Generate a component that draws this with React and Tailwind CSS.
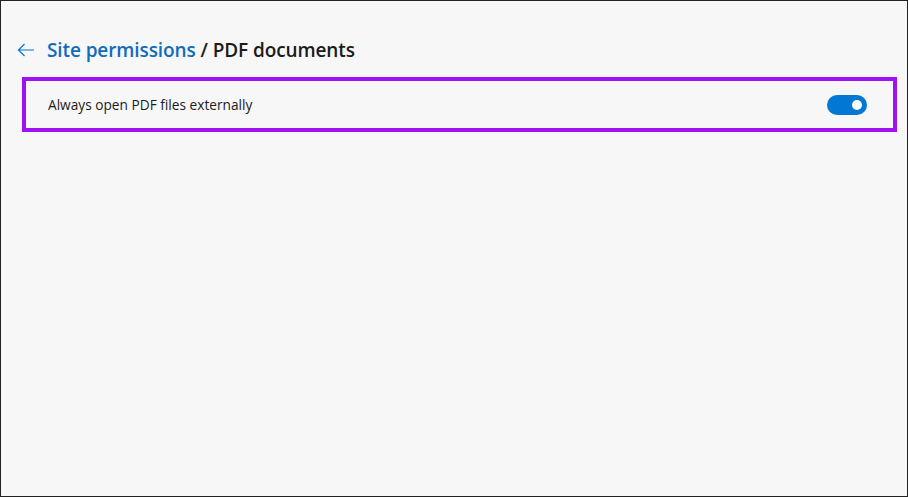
import { useState } from 'react';

export default function App() {
  const [on, setOn] = useState(true);

  return (
    <div className="h-[497px] w-[908px] border border-[#222] bg-[#f7f7f7] font-['Open_Sans',sans-serif] text-[#1b1b1b]">
      <div className="flex items-center pl-[15px] pt-[35px]">
        <button type="button" className="flex h-[28px] w-[20px] items-center justify-center text-[#0078d4]" aria-label="Back">
          <svg viewBox="0 0 18 14" className="h-[14px] w-[18px]" fill="none" stroke="currentColor" strokeWidth="1.2">
            <path d="M17 7H1.5M7.5 1L1.5 7l6 6" />
          </svg>
        </button>
        <h1 className="ml-[11px] text-[19px] font-[550] leading-[28px] tracking-[-0.1px]">
          <span className="text-[#0f6cbd]">Site permissions</span>
          <span> / PDF documents</span>
        </h1>
      </div>

      <div className="ml-[21px] mt-[13px] flex h-[55px] w-[875px] items-center justify-between border-4 border-[#a010f2] pl-[22px] pr-[26px]">
        <span className="text-[13.7px] leading-none">Always open PDF files externally</span>
        <button
          type="button"
          onClick={() => setOn(!on)}
          className={`flex h-[20px] w-[40px] items-center rounded-full px-[5px] ${on ? 'justify-end bg-[#0078d4]' : 'justify-start border border-[#666] bg-white'}`}
          aria-label="Always open PDF files externally"
        >
          <span className={`block h-[10px] w-[10px] rounded-full ${on ? 'bg-white' : 'bg-[#666]'}`} />
        </button>
      </div>
    </div>
  );
}
